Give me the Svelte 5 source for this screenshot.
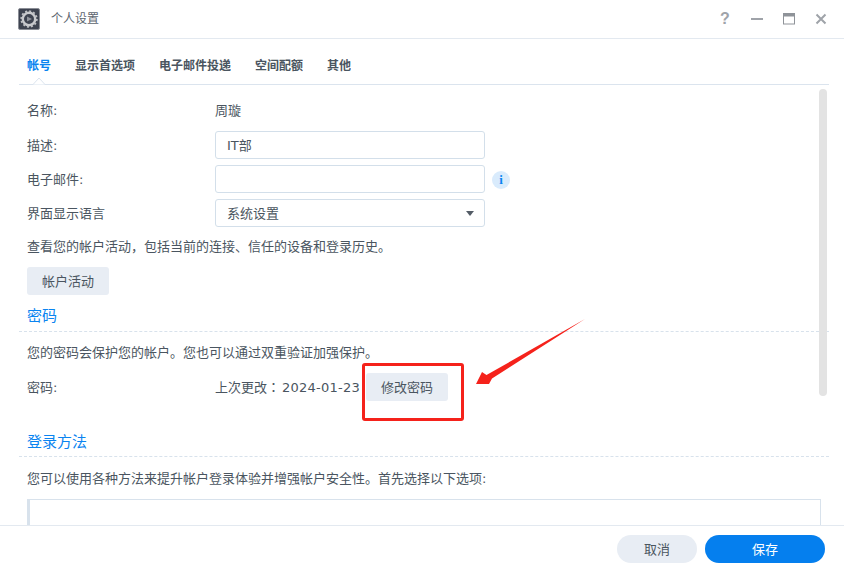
<script>
  const tabs = ["帐号", "显示首选项", "电子邮件投递", "空间配额", "其他"];
</script>

<div class="window">
  <header class="titlebar">
    <svg class="app-icon" width="22" height="22" viewBox="0 0 22 22">
      <rect x="0.5" y="0.5" width="21" height="21" rx="1.5" fill="#3e4350" stroke="#8b8e96" />
      <circle cx="11" cy="11" r="6.2" fill="none" stroke="#c8c9cd" stroke-width="2.4" />
      <circle cx="11" cy="11" r="7.8" fill="none" stroke="#bfc0c4" stroke-width="1.8" stroke-dasharray="2 2.08" />
      <path d="M9 8.500l5 2.500-5 2.500z" fill="#8f929a" />
    </svg>
    <span class="title">个人设置</span>
    <div class="controls">
      <span class="help">?</span>
      <svg width="12" height="12" viewBox="0 0 12 12"><rect y="5" width="12" height="2" fill="#9fa3a9" /></svg>
      <svg width="12" height="12" viewBox="0 0 12 12"><rect x="0.5" y="0.5" width="11" height="10.5" fill="none" stroke="#8f9399" /><rect width="12" height="3.5" fill="#8f9399" /></svg>
      <svg width="12" height="12" viewBox="0 0 12 12"><path d="M1.500 1.500l9 9M10.500 1.500l-9 9" stroke="#9fa3a9" stroke-width="2" /></svg>
    </div>
  </header>

  <nav class="tabs">
    {#each tabs as tab, i}
      <span class="tab" class:active={i === 0}>{tab}</span>
    {/each}
    <svg class="notch" width="16" height="8" viewBox="0 0 16 8">
      <path d="M0 7.500h2L8 1l6 6.500h2" fill="#fff" stroke="#dbe4ee" />
    </svg>
  </nav>

  <main class="content">
    <div class="scroll">
      <div class="row name-row"><span class="label">名称:</span><span class="value">周璇</span></div>
      <div class="row"><span class="label">描述:</span><div class="field">IT部</div></div>
      <div class="row">
        <span class="label">电子邮件:</span><div class="field"></div>
        <span class="info">i</span>
      </div>
      <div class="row">
        <span class="label">界面显示语言</span>
        <div class="field select">系统设置<span class="caret"></span></div>
      </div>
      <p class="text first">查看您的帐户活动，包括当前的连接、信任的设备和登录历史。</p>
      <button class="btn">帐户活动</button>

      <h2 class="section pw">密码</h2>
      <p class="text">您的密码会保护您的帐户。您也可以通过双重验证加强保护。</p>
      <div class="row pw-row">
        <span class="label">密码:</span>
        <span class="value changed">上次更改<span class="colon">：</span><span class="date">2024-01-23</span></span>
        <button class="btn">修改密码</button>
      </div>

      <h2 class="section login">登录方法</h2>
      <p class="text">您可以使用各种方法来提升帐户登录体验并增强帐户安全性。首先选择以下选项:</p>
      <div class="methods"></div>
    </div>
    <div class="scrollbar"></div>
  </main>

  <footer class="footer">
    <button class="pill cancel">取消</button>
    <button class="pill save">保存</button>
  </footer>

  <div class="mark"></div>
  <svg class="arrow" width="112" height="68" viewBox="0 0 112 68">
    <path d="M110 1L17 60.500L14 66L1 66L7 54L11.500 57Z" fill="#f5221b" />
  </svg>
</div>

<style>
  :global(body) {
    margin: 0;
    background: #fff;
  }

  .window {
    position: relative;
    display: flex;
    flex-direction: column;
    width: 844px;
    height: 573px;
    overflow: hidden;
    background: #fff;
    color: #4a5560;
    font-family: "DejaVu Sans", "Noto Sans CJK SC", sans-serif;
    font-size: 13px;
  }

  .titlebar {
    display: flex;
    align-items: center;
    flex: none;
    height: 38px;
    padding: 0 17px 0 18px;
    border-bottom: 1px solid #e3e9f0;
  }

  .app-icon {
    margin-right: 11px;
  }

  .title {
    color: #5d6670;
    font-size: 12px;
    line-height: 38px;
  }

  .controls {
    display: flex;
    align-items: center;
    gap: 20px;
    margin-left: auto;
  }

  .help {
    width: 12px;
    color: #9fa3a9;
    font-family: "Liberation Sans", sans-serif;
    font-size: 16px;
    font-weight: 700;
    line-height: 20px;
    text-align: center;
  }

  .tabs {
    position: relative;
    display: flex;
    flex: none;
    gap: 24px;
    height: 45px;
    margin: 0 15px 0 19px;
    padding-left: 8px;
    border-bottom: 1px solid #dbe4ee;
    font-size: 12px;
    font-weight: 700;
  }

  .tab {
    height: 45px;
    overflow: hidden;
    line-height: 55px;
  }

  .active {
    color: #0a84f0;
  }

  .notch {
    position: absolute;
    left: 12px;
    bottom: -1px;
  }

  .content {
    position: relative;
    flex: 1;
    min-height: 0;
    overflow: hidden;
    border-bottom: 1px solid #e3e9f0;
  }

  .scroll {
    padding: 9px 0 0 27px;
  }

  .row {
    display: flex;
    align-items: center;
    height: 28px;
    margin-bottom: 6px;
  }

  .name-row {
    margin-top: 2px;
    margin-bottom: 7px;
  }

  .label {
    flex: none;
    width: 188px;
    padding-bottom: 2px;
  }

  .value {
    padding-bottom: 2px;
  }

  .field {
    display: flex;
    align-items: center;
    width: 270px;
    height: 28px;
    padding: 0 11px 2px;
    box-sizing: border-box;
    border: 1px solid #d3dfea;
    border-radius: 3px;
  }

  .select {
    position: relative;
  }

  .caret {
    position: absolute;
    right: 10px;
    top: 11px;
    border-top: 5px solid #545c66;
    border-left: 4.500px solid transparent;
    border-right: 4.500px solid transparent;
  }

  .info {
    width: 18px;
    height: 18px;
    margin: 2px 0 0 7px;
    border-radius: 50%;
    background: #d9ebfc;
    color: #0a84f0;
    font-family: "Liberation Serif", serif;
    font-size: 13px;
    font-weight: 700;
    line-height: 18px;
    text-align: center;
  }

  .text {
    height: 20px;
    margin: 0;
    line-height: 20px;
  }

  .first {
    margin-top: 10px;
  }

  .btn {
    display: block;
    flex: none;
    width: 82px;
    height: 28px;
    margin: 0;
    padding: 0 0 2px;
    border: 0;
    border-radius: 3px;
    background: #e8edf4;
    color: #4a5560;
    font: inherit;
  }

  .text + .btn {
    margin-top: 10px;
  }

  .section {
    height: 20px;
    margin: 0 15px 0 -8px;
    padding: 0 0 6px 8px;
    border-bottom: 1px dashed #d8e2ec;
    color: #0a84f0;
    font-size: 15px;
    font-weight: 400;
    line-height: 22px;
  }

  .pw {
    margin-top: 10px;
    margin-bottom: 11px;
  }

  .pw-row {
    margin-top: 10px;
  }

  .changed {
    flex: none;
    width: 151px;
  }

  .colon {
    font-family: "Noto Sans CJK TC", sans-serif;
  }

  .date {
    margin-left: 2px;
    letter-spacing: 0.25px;
  }

  .login {
    margin-top: 30px;
    padding-bottom: 5px;
    margin-bottom: 12px;
  }

  .methods {
    width: 794px;
    height: 40px;
    margin-top: 10px;
    box-sizing: border-box;
    border: 1px solid #d8e2ec;
    border-left-width: 3px;
    border-bottom: 0;
  }

  .scrollbar {
    position: absolute;
    top: 4px;
    left: 819px;
    width: 8px;
    height: 307px;
    border-radius: 4px;
    background: #e3e3e3;
  }

  .footer {
    display: flex;
    flex: none;
    justify-content: flex-end;
    gap: 8px;
    height: 47px;
    padding: 9px 19px 0 0;
    box-sizing: border-box;
  }

  .pill {
    height: 28px;
    padding: 0 0 2px;
    border: 0;
    border-radius: 14px;
    font: inherit;
  }

  .cancel {
    width: 80px;
    background: #e8edf4;
    color: #4a5560;
  }

  .save {
    width: 120px;
    background: #057fee;
    color: #fff;
  }

  .mark {
    position: absolute;
    left: 362px;
    top: 363px;
    width: 102px;
    height: 58px;
    box-sizing: border-box;
    border: 3px solid #f5221b;
    border-radius: 3px;
  }

  .arrow {
    position: absolute;
    left: 475px;
    top: 318px;
  }
</style>
